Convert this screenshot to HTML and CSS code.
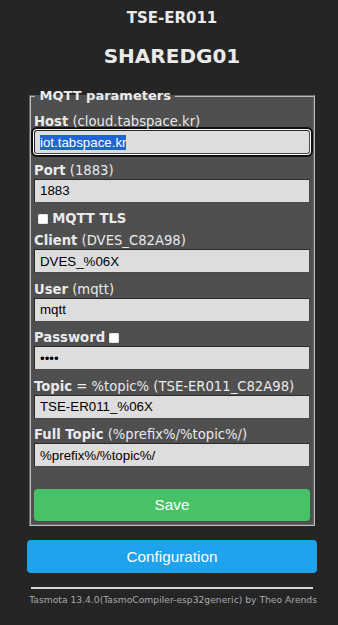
FILE: index.html
```html
<!DOCTYPE html>
<html lang="en">
<head>
<meta charset="UTF-8" />
<meta name="viewport" content="width=device-width, initial-scale=1" />
<title>TSE-ER011 - MQTT</title>
<link rel="stylesheet" href="styles.css">
</head>
<body>
  <div class="wrap">
    <h3 class="dev-name">TSE-ER011</h3>
    <h2 class="friendly">SHAREDG01</h2>

    <form class="mqtt-form" onsubmit="return false;">
      <fieldset class="params">
        <legend><b>&nbsp;MQTT parameters&nbsp;</b></legend>

        <div class="row">
          <label for="host"><b>Host</b> (cloud.tabspace.kr)</label>
          <input id="host" class="field host" type="text" value="iot.tabspace.kr" autofocus>
        </div>
        <div class="row">
          <label for="port"><b>Port</b> (1883)</label>
          <input id="port" class="field" type="text" value="1883">
        </div>
        <div class="row check-row">
          <label><input class="box" type="checkbox"> <b>MQTT TLS</b></label>
        </div>
        <div class="row">
          <label for="client"><b>Client</b> (DVES_C82A98)</label>
          <input id="client" class="field" type="text" value="DVES_%06X">
        </div>
        <div class="row">
          <label for="user"><b>User</b> (mqtt)</label>
          <input id="user" class="field" type="text" value="mqtt">
        </div>
        <div class="row">
          <label for="pw"><b>Password</b> <input class="box" type="checkbox"></label>
          <input id="pw" class="field" type="password" value="mqtt">
        </div>
        <div class="row">
          <label for="topic"><b>Topic</b> = %topic% (TSE-ER011_C82A98)</label>
          <input id="topic" class="field" type="text" value="TSE-ER011_%06X">
        </div>
        <div class="row">
          <label for="full"><b>Full Topic</b> (%prefix%/%topic%/)</label>
          <input id="full" class="field" type="text" value="%prefix%/%topic%/">
        </div>

        <button class="btn btn-save" type="button">Save</button>
      </fieldset>
    </form>

    <button class="btn btn-config" type="button">Configuration</button>

    <div class="footer">
      <hr>
      <a href="#">Tasmota 13.4.0(TasmoCompiler-esp32generic) by Theo Arends</a>
    </div>
  </div>

<script>
  (() => {
    const host = document.getElementById('host');
    host.focus();
    host.select();
  })();
</script>
</body>
</html>
```

FILE: styles.css
```css
body {
  margin: 0;
  background: #252525;
  color: #eaeaea;
  font-family: "DejaVu Sans", Verdana, sans-serif;
  font-size: 13.2px;
}
.wrap {
  width: 290px;
  margin-left: 27px;
}
.dev-name {
  margin: 8px 0 0;
  font-size: 15px;
  line-height: 20px;
  text-align: center;
}
.friendly {
  margin: 15px 0 0;
  font-size: 20px;
  line-height: 26px;
  text-align: center;
}
.mqtt-form {
  margin: 19px 0 0;
}
.params {
  margin: 0 2px;
  padding: 9px 3px 3px;
  background: #4f4f4f;
  border: 2px groove #bdbdbd;
}
.params legend {
  margin-left: 1px;
  padding: 0;
  font-size: 13px;
  line-height: 16px;
}
.row {
  margin-bottom: 7.5px;
}
.row label {
  display: block;
  line-height: 17px;
}
.field {
  display: block;
  width: 100%;
  height: 24px;
  box-sizing: border-box;
  margin: 0;
  padding: 0 5px;
  background: #dddddd;
  color: #000;
  border: 1px solid #2a2a2a;
  border-right-color: #4a4a4a;
  border-bottom-color: #4a4a4a;
  font-family: "Liberation Sans", Arial, sans-serif;
  font-size: 13.3px;
}
.host {
  outline: none;
  border-radius: 3px;
  box-shadow: 0 0 0 1px #fff, 0 0 0 3px #101010;
}
.host::selection {
  background: #1f63d6;
  color: #fff;
}
.check-row {
  margin-bottom: 5px;
}
.check-row label {
  padding-left: 4px;
}
.box {
  appearance: none;
  -webkit-appearance: none;
  width: 10px;
  height: 10px;
  margin: 0;
  background: #fff;
  border: 1px solid #e6e6e6;
  border-radius: 1px;
  vertical-align: -1px;
}
.btn {
  display: block;
  width: 100%;
  border: 0;
  border-radius: 4px;
  color: #faffff;
  font-family: "Liberation Sans", Arial, sans-serif;
  font-size: 15.3px;
  cursor: pointer;
}
.btn-save {
  height: 32px;
  margin-top: 22px;
  background: #47c266;
}
.btn-config {
  height: 33px;
  margin-top: 14px;
  background: #1fa3ec;
}
.footer {
  text-align: right;
  font-size: 9.2px;
}
.footer hr {
  margin: 14px 4px 5px;
  border: 0;
  border-top: 2px solid #d8d8d8;
}
.footer a {
  color: #aaa;
  text-decoration: none;
}
```
